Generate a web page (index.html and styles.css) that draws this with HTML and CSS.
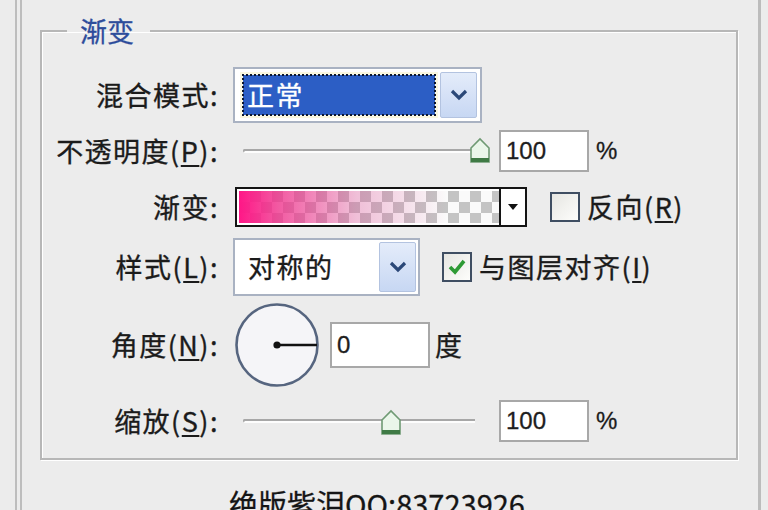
FILE: index.html
```html
<!DOCTYPE html>
<html lang="zh-CN">
<head>
<meta charset="utf-8">
<title>渐变叠加</title>
<link rel="stylesheet" href="styles.css">
</head>
<body>
<div class="window">
  <fieldset class="group">
    <legend class="group-title">渐变</legend>
    <div class="form">
      <div class="lbl">混合模式:</div>
      <div class="ctrl">
        <div class="select select-mode">
          <div class="select-field selected">正常</div>
          <div class="select-btn">
            <svg width="18" height="12" viewBox="0 0 18 12"><path d="M2 2 L9 9 L16 2" fill="none" stroke="#2b4878" stroke-width="3.2"/></svg>
          </div>
        </div>
      </div>

      <div class="lbl">不透明度(<u>P</u>):</div>
      <div class="ctrl">
        <div class="slider slider-a">
          <span class="track"></span>
          <svg class="thumb" style="left:235px" width="24" height="28" viewBox="0 0 24 28"><path d="M3 11 L12 2 L21 11 L21 25 L3 25 Z" fill="#eaf6ea" stroke="#6f9a74" stroke-width="1.6"/><rect x="3" y="21" width="18" height="4" fill="#3f7a45"/></svg>
        </div>
        <div class="num">100</div>
        <span class="unit">%</span>
      </div>

      <div class="lbl">渐变:</div>
      <div class="ctrl">
        <div class="gradient">
          <div class="gradient-fill"></div>
          <div class="gradient-btn">
            <svg width="12" height="8" viewBox="0 0 12 8"><path d="M1 1 L11 1 L6 7 Z" fill="#111"/></svg>
          </div>
        </div>
        <span class="check"></span>
        <span class="check-label">反向(<u>R</u>)</span>
      </div>

      <div class="lbl">样式(<u>L</u>):</div>
      <div class="ctrl">
        <div class="select select-style">
          <div class="select-field">对称的</div>
          <div class="select-btn">
            <svg width="18" height="12" viewBox="0 0 18 12"><path d="M2 2 L9 9 L16 2" fill="none" stroke="#2b4878" stroke-width="3.2"/></svg>
          </div>
        </div>
        <span class="check checked">
          <svg width="24" height="24" viewBox="0 0 24 24"><path d="M5 12 L10 17 L19 6" fill="none" stroke="#2e9a35" stroke-width="3.6"/></svg>
        </span>
        <span class="check-label">与图层对齐(<u>I</u>)</span>
      </div>

      <div class="lbl">角度(<u>N</u>):</div>
      <div class="ctrl">
        <svg class="dial" width="86" height="86" viewBox="0 0 86 86">
          <circle cx="43" cy="43" r="40.5" fill="#f5f5f8" stroke="#56657f" stroke-width="2.6"/>
          <line x1="43" y1="43" x2="83" y2="43" stroke="#111" stroke-width="2.6"/>
          <circle cx="43" cy="43" r="3.6" fill="#111"/>
        </svg>
        <div class="num num-angle">0</div>
        <span class="unit unit-cjk">度</span>
      </div>

      <div class="lbl">缩放(<u>S</u>):</div>
      <div class="ctrl">
        <div class="slider slider-b">
          <span class="track"></span>
          <svg class="thumb" style="left:146px" width="24" height="28" viewBox="0 0 24 28"><path d="M3 11 L12 2 L21 11 L21 25 L3 25 Z" fill="#eaf6ea" stroke="#6f9a74" stroke-width="1.6"/><rect x="3" y="21" width="18" height="4" fill="#3f7a45"/></svg>
        </div>
        <div class="num">100</div>
        <span class="unit">%</span>
      </div>
    </div>
  </fieldset>
  <p class="footer">绝版紫泪QQ:83723926</p>
</div>
</body>
</html>
```
FILE: styles.css
```css
* { box-sizing: border-box; }
html, body { margin: 0; height: 100%; }
body {
  background: #ececec;
  font-family: "Noto Sans CJK SC", "Noto Sans", sans-serif;
  color: #1b1b1b;
  overflow: hidden;
}
u { text-decoration-thickness: 2px; text-underline-offset: 3px; }

.window {
  margin-left: 15px;
  width: 746px;
  height: 510px;
  border-left: 7px double #bdbdbd;
  border-right: 3px solid #bcbcbc;
  padding: 16px 20px 0 18px;
}

.group {
  margin: 0;
  min-width: 0;
  border: 2px solid #b7b7b7;
  box-shadow: inset 1px 1px 0 #fff, 1px 1px 0 #fff;
  padding: 20px 0 8px 0;
}
.group-title {
  margin-left: 25px;
  padding: 0 16px 0 13px;
  font-size: 27px;
  line-height: 30px;
  color: #2d4c9b;
  -webkit-text-stroke: 0.3px #2d4c9b;
}

.form {
  display: grid;
  grid-template-columns: 177px auto;
  grid-template-rows: 58px 54px 58px 62px 94px 58px;
  column-gap: 14px;
  align-items: center;
}
.lbl {
  text-align: right;
  font-size: 27px;
  line-height: 30px;
  letter-spacing: 1.5px;
  white-space: nowrap;
  color: #1b1b1b;
  -webkit-text-stroke: 0.35px #1b1b1b;
}
.ctrl {
  display: flex;
  align-items: center;
  font-size: 27px;
  line-height: 30px;
  letter-spacing: 1.5px;
}

/* selects */
.select {
  display: flex;
  align-items: stretch;
  background: #fff;
  border: 2px solid #a9b2c2;
}
.select-mode { width: 249px; height: 56px; padding: 3px 3px 3px 8px; gap: 5px; }
.select-style { width: 187px; height: 58px; padding: 2px 2px 2px 13px; gap: 4px; }
.select-field {
  flex: 1;
  display: flex;
  align-items: center;
  font-size: 27px;
  -webkit-text-stroke: 0.3px currentColor;
}
.select-field.selected {
  background: #2c5ec5;
  color: #fff;
  padding-left: 4px;
  outline: 2px dotted #0d1730;
  outline-offset: -1px;
  box-shadow: 0 0 0 3px #fbf8e0;
  margin: 3px 0;
}
.select-btn {
  width: 37px;
  display: flex;
  align-items: center;
  justify-content: center;
  background: linear-gradient(#e4ecfa, #c7d7f3);
  border: 1px solid #b3c3e0;
  border-radius: 2px;
}

/* sliders */
.slider {
  position: relative;
  width: 259px;
  height: 30px;
  padding: 13px 14px 0 10px;
}
.slider-b { padding-right: 17px; }
.track {
  display: block;
  height: 4px;
  border-top: 2px solid #a7a7a7;
  border-bottom: 2px solid #fdfdfd;
  border-left: 2px solid #a7a7a7;
  border-radius: 3px 0 0 3px;
  background: #dcdcdc;
}
.thumb {
  position: absolute;
  top: 1px;
}
.slider-b .thumb { top: 3px; }

.num {
  width: 90px;
  height: 42px;
  margin-left: 7px;
  background: #fff;
  border: 2px solid #a8a8a8;
  font-family: "Liberation Sans", Arial, sans-serif;
  font-size: 24px;
  line-height: 38px;
  letter-spacing: 0;
  padding-left: 5px;
  color: #1e1e1e;
  -webkit-text-stroke: 0.3px #1e1e1e;
}
.num-angle { width: 100px; height: 46px; line-height: 42px; margin-left: 10px; }
.unit {
  margin-left: 7px;
  font-family: "Liberation Sans", Arial, sans-serif;
  font-size: 24px;
  letter-spacing: 0;
  -webkit-text-stroke: 0.3px #1b1b1b;
}
.unit-cjk {
  margin-left: 5px;
  font-family: "Noto Sans CJK SC", sans-serif;
  font-size: 27px;
}

/* gradient */
.gradient {
  margin-left: 2px;
  width: 292px;
  height: 40px;
  display: flex;
  border: 2px solid #141414;
  background: #fff;
}
.gradient-fill {
  flex: 1;
  border: 2px solid #fff;
  border-right: 0;
  background:
    linear-gradient(to right, #ff1787 0%, rgba(240, 50, 140, 0.8) 15%, rgba(220, 80, 150, 0.35) 45%, rgba(255, 255, 255, 0) 80%),
    repeating-conic-gradient(#c4c4c4 0 25%, #fafafa 0 50%) 0 0 / 22px 22px;
}
.gradient-btn {
  width: 26px;
  border-left: 2px solid #141414;
  display: flex;
  align-items: center;
  justify-content: center;
}

/* checkbox */
.check {
  width: 30px;
  height: 30px;
  margin-left: 23px;
  border: 2px solid #3f4e62;
  background: linear-gradient(135deg, #e6e6e2, #fdfdfb);
  display: flex;
  align-items: center;
  justify-content: center;
}
.check.checked { margin-left: 22px; }
.check-label {
  margin-left: 7px;
  white-space: nowrap;
  -webkit-text-stroke: 0.35px #1b1b1b;
}

.dial { margin-left: 1px; display: block; }

.footer {
  margin: 28px 0 0 0;
  padding-right: 24px;
  text-align: center;
  font-size: 29px;
  line-height: 30px;
  color: #151515;
  -webkit-text-stroke: 0.3px #151515;
}
```
